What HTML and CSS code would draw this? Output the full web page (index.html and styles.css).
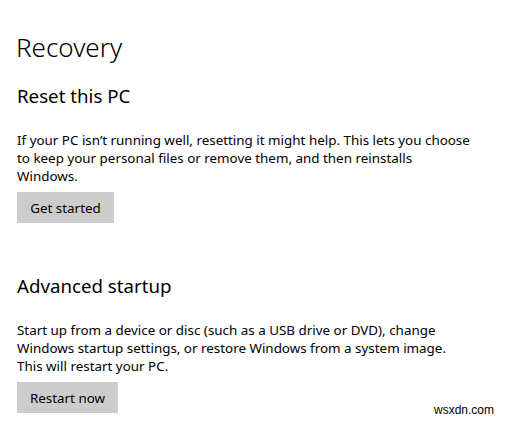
FILE: index.html
```html
<!DOCTYPE html>
<html>
<head>
<meta charset="utf-8">
<link rel="stylesheet" href="styles.css">
</head>
<body>
<main class="page">
  <h1 class="title">Recovery</h1>
  <section class="section first">
    <h2 class="heading">Reset this PC</h2>
    <p class="desc">If your PC isn’t running well, resetting it might help. This lets you choose<br>to keep your personal files or remove them, and then reinstalls<br>Windows.</p>
    <button class="btn btn-get">Get started</button>
  </section>
  <section class="section second">
    <h2 class="heading">Advanced startup</h2>
    <p class="desc">Start up from a device or disc (such as a USB drive or DVD), change<br>Windows startup settings, or restore Windows from a system image.<br>This will restart your PC.</p>
    <button class="btn btn-restart">Restart now</button>
  </section>
</main>
<div class="watermark">wsxdn.com</div>
</body>
</html>
```
FILE: styles.css
```css
html, body {
  margin: 0;
  padding: 0;
  background: #ffffff;
}
body {
  width: 507px;
  height: 421px;
  overflow: hidden;
  position: relative;
  font-family: "Noto Sans", "Open Sans", sans-serif;
  color: #000000;
}
.page {
  padding: 0 0 0 16px;
}
.title {
  margin: 30px 0 0 0;
  font-size: 26px;
  line-height: 34px;
  font-weight: 300;
}
.section {
  padding-left: 1px;
}
.first {
  margin-top: 19px;
}
.second {
  margin-top: 50px;
}
.heading {
  margin: 0;
  font-size: 18.7px;
  line-height: 26px;
  font-weight: 400;
}
.desc {
  margin: 22px 0 0 0;
  font-size: 13.4px;
  line-height: 18px;
}
.btn {
  display: block;
  margin-top: 7px;
  height: 31px;
  border: none;
  background: #cccccc;
  font-family: inherit;
  font-size: 13.4px;
  color: #000000;
  padding: 0;
}
.btn-get { width: 97px; }
.btn-restart { width: 101px; }
.watermark {
  position: absolute;
  left: 434px;
  top: 403px;
  font-family: "Liberation Sans", Arial, sans-serif;
  font-size: 12px;
  line-height: 14px;
  color: #000;
}
```
